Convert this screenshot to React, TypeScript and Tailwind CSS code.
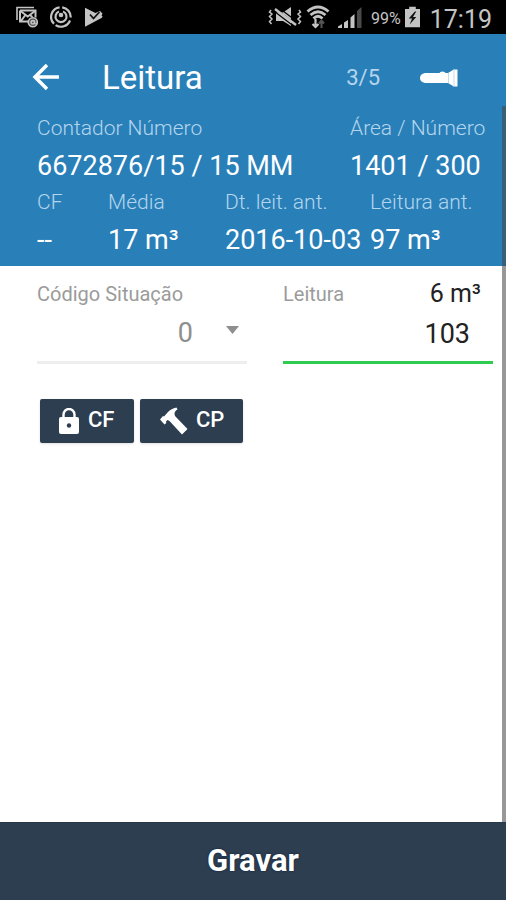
import { useState } from "react";

const readings = [
  { label: "CF", value: "--" },
  { label: "Média", value: "17 m³" },
  { label: "Dt. leit. ant.", value: "2016-10-03" },
  { label: "Leitura ant.", value: "97 m³" },
];

function StatusBar() {
  return (
    <div className="flex h-[34px] items-center justify-between bg-black pr-[14px] pl-4 text-[#c4c4c4]">
      <div className="flex items-center gap-3">
        {/* Mail */}
        <svg className="h-[22px] w-[22px]" viewBox="0 0 22 22" fill="none" stroke="currentColor">
          <path d="M1 14V1.500h17" strokeWidth="1.600" />
          <path d="M4 4.500h15.500v7M4 4.500v11h8" strokeWidth="2" />
          <path d="M4.500 5l7.200 5.500L19 5M5 15l4-5.500M14.500 9.500l2 1.500" strokeWidth="2" />
          <circle cx="16.800" cy="16.300" r="4.500" fill="#555" strokeWidth="1.600" />
          <circle cx="16.800" cy="16.300" r="1.700" strokeWidth="1.600" />
          <path d="M18.600 14.500v3q1 .8 2.300-.4" strokeWidth="1.200" />
        </svg>
        {/* Sync */}
        <svg className="h-[22px] w-[22px]" viewBox="0 0 22 22" fill="none" stroke="currentColor">
          <path d="M9.600 1.300A9.700 9.700 0 0 0 4 17.800M5.600 19.100A9.700 9.700 0 0 0 20 14.500M20.700 11.500A9.700 9.700 0 0 0 12.200 1.400" strokeWidth="2.200" />
          <path d="M9 5.500A5.500 5.500 0 1 0 13 5.500" strokeWidth="2.200" />
          <circle cx="11" cy="9" r="2.300" fill="currentColor" stroke="none" />
        </svg>
        {/* Play with tick */}
        <svg className="h-5 w-5" viewBox="0 0 20 20">
          <path d="M1 .8L11.500 6l4.500-2 2.500 2.500-1 2q2 1 0 2.500L1 19.800z" fill="currentColor" />
          <path d="M6 7.500l3.500 4L15.500 5" fill="none" stroke="#111" strokeWidth="1.800" />
        </svg>
      </div>

      <div className="flex items-center">
        {/* Muted, vibrating */}
        <svg className="h-[22px] w-[34px]" viewBox="0 0 34 22" fill="none" stroke="currentColor">
          <path d="M3 4l-1.500 2L4 8 1.500 10.500 4 13l-2.500 2.500L3.500 18M31 4l1.500 2L30 8l2.500 2.500L30 13l2.500 2.500-2 2.500" strokeWidth="1.500" />
          <path d="M8 6.500h7l8-5.500v19l-8-5H8z" fill="currentColor" stroke="none" />
          <path d="M6.500 2l21 16M8.500 0l21 16M4.500 4l21 16" stroke="#000" strokeWidth="1.200" />
          <path d="M7 3l21 16" strokeWidth="2.400" />
        </svg>
        {/* Wi-fi */}
        <svg className="ml-1 h-6 w-6" viewBox="0 0 24 24" fill="none" stroke="currentColor">
          <path d="M1.500 6.500Q12-2.500 22.500 6.500M4.500 10Q12 3.500 19.500 10M7.500 13.500Q12 9 16.500 13.500" strokeWidth="2.800" />
          <path d="M9.500 14v8M6.500 19l3 3 3-3" strokeWidth="2.200" />
          <path d="M15.500 23v-7M13 18.500l2.500-3 2.500 3" stroke="#555" strokeWidth="2" />
        </svg>
        {/* Signal */}
        <svg className="ml-2 h-[23px] w-6" viewBox="0 0 24 23" fill="currentColor">
          <path d="M0 22v-1.500L4 18v4zM6 16.500L10 14v8H6zM12.500 11.500l4-3.500v14h-4z" />
          <path d="M19 5l4.500-4v21H19z" fill="#4a4a4a" />
        </svg>
        <span className="ml-[9px] pt-1 text-[16px] leading-5">99%</span>
        {/* Battery */}
        <svg className="ml-1 h-[22px] w-[15px]" viewBox="0 0 16 22">
          <path d="M4.500 0h7v2.500H16V22H0V2.500h4.500z" fill="currentColor" />
          <path d="M10.500 5L4 12.500h3.500L5 19l7-8H8.500L12 5z" fill="#111" />
        </svg>
        <span className="ml-[10px] pt-[6px] text-[25px] leading-7">17:19</span>
      </div>
    </div>
  );
}

function Field({ label, value }: { label: string; value: string }) {
  return (
    <div className="whitespace-nowrap">
      <dt className="text-[21px] leading-8 font-light text-[#b5d5ec]">{label}</dt>
      <dd className="pt-[3px] pb-px text-[27px] leading-[38px] text-white">{value}</dd>
    </div>
  );
}

export default function App() {
  const [code, setCode] = useState("0");
  const [reading, setReading] = useState("103");

  return (
    <div className="flex min-h-screen flex-col bg-white font-[Roboto,sans-serif]">
      <StatusBar />

      <div className="relative flex flex-1 flex-col">
        <header className="bg-[#2980b9] pb-[6px]">
          <div className="flex h-[78px] items-center pt-[10px] pr-12 pl-8 text-white">
            <button type="button" aria-label="Voltar" className="pb-[2px]">
              <svg className="h-7 w-7" viewBox="0 0 28 28" fill="none" stroke="currentColor" strokeWidth="3.500">
                <path d="M27 14H3M15 2L3 14l12 12" />
              </svg>
            </button>
            <h1 className="ml-[42px] flex-1 text-[33px] leading-10">Leitura</h1>
            <span className="text-[22px] leading-8 text-[#b5d5ec]">3/5</span>
            <button type="button" aria-label="Lanterna" className="ml-[39px]">
              <svg className="h-5 w-[39px]" viewBox="0 0 39 20" fill="currentColor">
                <path d="M6 5h14.500q.5-1.500 3-1.500T26.500 5H29l5-3h1v16h-1l-5-3H6Q1 14 1 10t5-5z" />
                <path d="M34 1.500h4.500v17H34z" />
                <path d="M29.500 5v10M35 2v16" stroke="#a9cfe9" strokeWidth=".7" />
              </svg>
            </button>
          </div>

          <dl className="grid grid-cols-[313fr_156fr] pl-[37px]">
            <Field label="Contador Número" value="6672876/15 / 15 MM" />
            <Field label="Área / Número" value="1401 / 300" />
          </dl>
          <dl className="grid grid-cols-[71fr_117fr_145fr_136fr] pl-[37px]">
            {readings.map((item) => (
              <Field key={item.label} label={item.label} value={item.value} />
            ))}
          </dl>
        </header>

        <main className="flex-1 pt-3 pr-[13px] pl-[37px]">
          <div className="grid grid-cols-2 gap-9">
            <div>
              <label htmlFor="code" className="block text-[20px] leading-8 text-[#9b9b9b]">
                Código Situação
              </label>
              <div className="relative">
                <select
                  id="code"
                  value={code}
                  onChange={(e) => setCode(e.target.value)}
                  className="block h-[54px] w-full appearance-none border-b-3 border-[#eeeeee] bg-transparent pr-[54px] pb-1 text-[27px] text-[#8e8e8e] outline-none [text-align-last:right]"
                >
                  <option value="0">0</option>
                  <option value="1">1</option>
                  <option value="2">2</option>
                </select>
                <svg className="pointer-events-none absolute top-4 right-2 h-2 w-[13px]" viewBox="0 0 13 8">
                  <path d="M0 0h13L6.500 8z" fill="#8e8e8e" />
                </svg>
              </div>
            </div>

            <div>
              <div className="flex items-center justify-between pr-3">
                <label htmlFor="reading" className="text-[20px] leading-8 text-[#9b9b9b]">
                  Leitura
                </label>
                <output htmlFor="reading" className="text-[25px] leading-8 text-[#222222]">
                  6 m³
                </output>
              </div>
              <input
                id="reading"
                type="text"
                inputMode="numeric"
                value={reading}
                onChange={(e) => setReading(e.target.value)}
                className="block h-[54px] w-full border-b-3 border-[#2ecc50] bg-transparent pr-[23px] pb-1 text-right text-[27px] text-[#222222] outline-none"
              />
            </div>
          </div>

          <div className="mt-[35px] ml-[3px] flex gap-[6px] text-[22px] font-medium text-white">
            <button type="button" className="flex h-11 w-[94px] items-center rounded-xs bg-[#2c3e50] pl-[19px] shadow">
              <svg className="h-[26px] w-5" viewBox="0 0 20 26">
                <path d="M4.500 11V6.500a5.500 5.500 0 0 1 11 0V11" fill="none" stroke="currentColor" strokeWidth="2.400" />
                <rect y="9" width="20" height="17" rx="2" fill="currentColor" />
                <circle cx="10" cy="17.500" r="2.200" fill="#2c3e50" />
              </svg>
              <span className="ml-[9px] pb-1">CF</span>
            </button>
            <button type="button" className="flex h-11 w-[103px] items-center rounded-xs bg-[#2c3e50] pl-5 shadow">
              <svg className="h-7 w-7" viewBox="0 0 28 28" fill="currentColor">
                <path d="M0 12.500L3 9l1 .5L8 5Q11 1.500 16.500.5L17.500 2.500q-3 1.500-3 4.500l.5 2L27.500 22l-5.500 5.500L9.500 14l-2-1-1.500 1.500.3 1.500-1.800 1.500z" />
              </svg>
              <span className="ml-[8px] pb-1">CP</span>
            </button>
          </div>
        </main>

        {/* Scroll indicator */}
        <div className="pointer-events-none absolute top-[72px] right-0 bottom-0 w-1 bg-[#444444]/55" />
      </div>

      <button
        type="button"
        className="h-[78px] w-full border-t border-[#24384a] bg-[#2c3e50] text-[31px] font-bold text-white text-shadow-[0_0_2px_#0b1a33]"
      >
        Gravar
      </button>
    </div>
  );
}
